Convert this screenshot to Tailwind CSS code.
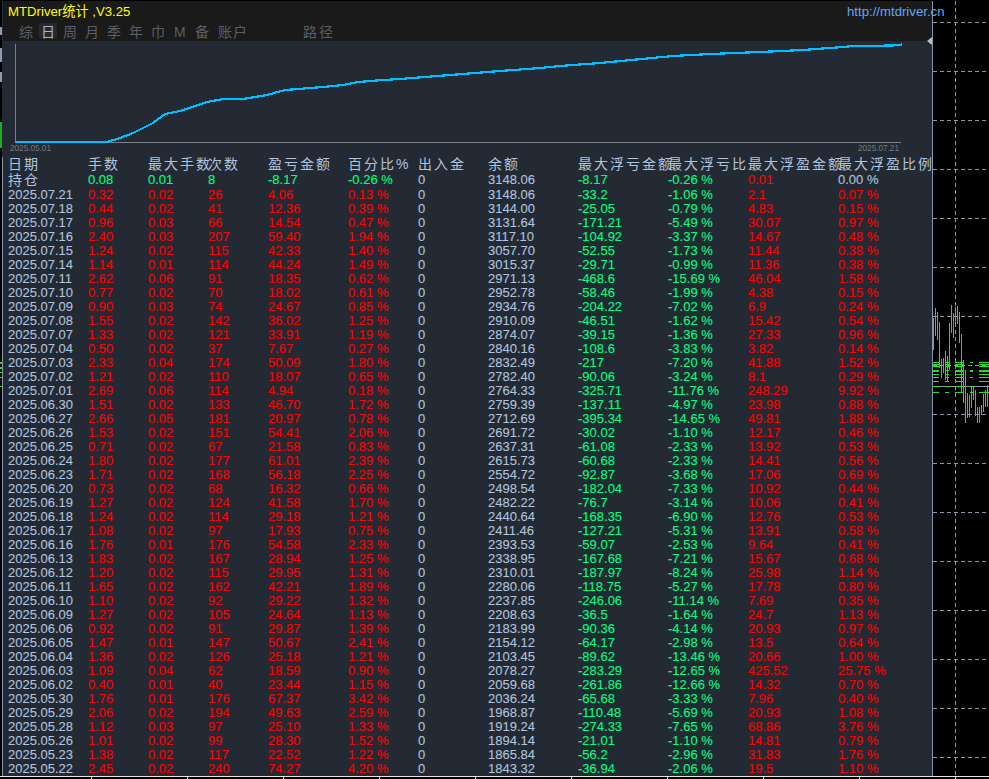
<!DOCTYPE html>
<html lang="zh">
<head>
<meta charset="UTF-8">
<title>MTDriver统计</title>
<script src="https://cdn.jsdelivr.net/npm/@tailwindcss/browser@4"></script>
</head>
<body class="bg-black h-[779px] w-[989px] overflow-hidden font-['Liberation_Sans','Noto_Sans_CJK_SC',sans-serif]">
<div class="flex h-[776px] pt-px">
  <!-- left edge of the terminal -->
  <div class="w-[2px] flex flex-col shrink-0">
    <div class="h-[26px]"></div>
    <div class="h-[8px] bg-[#8f9bb3]"></div>
    <div class="h-[13px]"></div>
    <div class="h-[14px] bg-[#8f9bb3]"></div>
    <div class="h-[10px]"></div>
    <div class="h-[10px] bg-[#8f9bb3]"></div>
    <div class="h-[40px]"></div>
    <div class="h-[26px] bg-[#22aa22]"></div>
    <div class="h-[214px]"></div>
    <div class="h-[2px] bg-[#22e022]"></div>
    <div class="h-[3px]"></div>
    <div class="h-[2px] bg-[#22e022]"></div>
    <div class="h-[3px]"></div>
    <div class="h-px bg-[#22e022]"></div>
    <div class="h-[4px]"></div>
    <div class="h-px bg-[#22e022]"></div>
    <div class="h-[8px]"></div>
    <div class="h-px bg-[#22e022]"></div>
  </div>

  <!-- stats panel -->
  <div class="w-[931px] shrink-0 flex flex-col bg-[#232a33] border-l border-r border-[#8496ad] border-l-[#232a33] relative">
    <div class="h-[40px] bg-[#1a1a1a] shrink-0 relative">
      <div class="h-[22px] pl-[5px] flex items-center text-[13.2px] leading-[20px]">
        <span class="text-[#ffff00]">MTDriver统计 ,V3.25</span>
        <span class="text-[#5fa8f5] absolute left-[844px] top-[1px] whitespace-nowrap">http://mtdriver.cn</span>
      </div>
      <div class="flex h-[18px] text-[14px] leading-[18px] tracking-[1px] text-[#5a6068] pl-[15px] whitespace-nowrap">
        <span class="w-[22px] pl-[1px]">综</span>
        <span class="w-[22px] relative"><span class="absolute left-[-1px] top-0 w-[18px] h-[15px] bg-[#232a33]"></span><span class="relative text-[#a7b8cf] pl-[1px]">日</span></span>
        <span class="w-[22px] pl-[1px]">周</span>
        <span class="w-[22px] pl-[1px]">月</span>
        <span class="w-[22px] pl-[1px]">季</span>
        <span class="w-[22px] pl-[1px]">年</span>
        <span class="w-[22px] pl-[1px]">巾</span>
        <span class="w-[22px] pl-[2px]">M</span>
        <span class="w-[22px] pl-[1px]">备</span>
        <span class="w-[87px] pl-[2px]">账户</span>
        <span class="tracking-[2px]">路径</span>
      </div>
      <span class="absolute right-0 top-[36px] w-0 h-0 border-y-[4px] border-y-transparent border-r-[5px] border-r-[#b8c0cc]"></span>
    </div>

    <!-- equity curve -->
    <svg class="block shrink-0" width="929" height="116" viewBox="3 41 929 116">
      <path d="M15.5 44V142.5H901" fill="none" stroke="#7b7f85" shape-rendering="crispEdges"/>
      <polyline shape-rendering="crispEdges" fill="none" stroke="#00bfff" stroke-width="2.2" points="15,142 107,142 120,138 133,133 153,123 165,114 180,111 207,102 223,99 243,99 267,95 285,90 323,87 343,85 358,82 383,80 400,79 450,75 500,71 540,68 560,66 600,63 673,56 710,54 760,52 803,50 843,47 853,46 893,45.5 902,44.5"/>
      <text x="10" y="151" font-size="8.2" fill="#767b81">2025.05.01</text>
      <text x="858" y="151" font-size="8.2" fill="#767b81">2025.07.21</text>
    </svg>

    <!-- table -->
    <div class="pl-[5px] -ml-px border-l border-[#8496ad] overflow-hidden flex-1">
      <div class="grid grid-cols-[80px_60px_60px_60px_80px_70px_70px_90px_90px_80px_90px_96px] h-[15px] text-[14px] tracking-[2px] leading-[15px] text-[#b0c4de] whitespace-nowrap">
        <span>日期</span><span>手数</span><span>最大手数</span><span>次数</span><span>盈亏金额</span><span>百分比%</span><span>出入金</span><span>余额</span><span>最大浮亏金额</span><span>最大浮亏比</span><span>最大浮盈金额</span><span>最大浮盈比例</span>
      </div>
      <div class="grid grid-cols-[80px_60px_60px_60px_80px_70px_70px_90px_90px_80px_90px_96px] h-[16px] text-[13px] leading-[16px] whitespace-nowrap [-webkit-text-stroke:0.1px]">
        <span class="text-[14px] tracking-[2px] text-[#b0c4de] [-webkit-text-stroke:0px]">持仓</span><span class="text-[#00ff7f]">0.08</span><span class="text-[#00ff7f]">0.01</span><span class="text-[#00ff7f]">8</span><span class="text-[#00ff7f]">-8.17</span><span class="text-[#00ff7f]">-0.26 %</span><span class="text-[#b0c4de]">0</span><span class="text-[#b0c4de]">3148.06</span><span class="text-[#00ff7f]">-8.17</span><span class="text-[#00ff7f]">-0.26 %</span><span class="text-[#ff0000]">0.01</span><span class="text-[#b0c4de]">0.00 %</span>
      </div>
      <div id="rows" class="[-webkit-text-stroke:0.1px]"></div>
    </div>
  </div>

  <!-- chart window behind the panel -->
  <svg class="block shrink-0" width="56" height="775" viewBox="933 1 56 775" shape-rendering="crispEdges">
    <path d="M933 22H989M933 71H989M933 120H989M933 169H989M933 218H989M933 267H989M933 316H989M933 365H989M933 414H989M933 463H989M933 512H989M933 561H989M933 610H989M933 659H989M933 708H989M933 757H989M955.5 1V776" stroke="#8a97a8" stroke-dasharray="4 3" fill="none"/>
    <path d="M933 386.5H989" stroke="#8a97a8"/>
    <path d="M933 362.5H939M945 362.5H949M955 362.5H963M970 362.5H973M979 362.5H989M933 364.5H939M945 364.5H949M955 364.5H963M979 364.5H989M933 366.5H939M945 366.5H949M955 366.5H963M979 366.5H989M933 370.5H939M945 370.5H949M955 370.5H963M970 370.5H973M979 370.5H989M933 371.5H939M955 371.5H963M970 371.5H973M979 371.5H989M933 374.5H939M945 374.5H949M955 374.5H963M979 374.5H989M933 377.5H939M945 377.5H949M955 377.5H963M970 377.5H973M979 377.5H989M933 381.5H939M945 381.5H949M955 381.5H963M979 381.5H989M933 386.5H939M945 386.5H949M955 386.5H963M970 386.5H973M933 392.5H939M945 392.5H949M955 392.5H963M970 392.5H973M979 392.5H989" stroke="#22e022"/>
    <path d="M933.5 318V350M935.5 308V336M937.5 312V340M939.5 322V368M941.5 359V378M943.5 358V373M945.5 351V380M947.5 356V381M949.5 323V370M951.5 305V333M953.5 313V338M955.5 307V323M957.5 306V324M959.5 312V343M961.5 334V393M963.5 360V403M965.5 370V423M967.5 393V418M969.5 395V417M971.5 387V408M973.5 387V400M975.5 390V416M977.5 407V423M979.5 407V423M981.5 405V415M983.5 394V412M985.5 390V407M987.5 385V407" stroke="#22e022" fill="none"/>
  </svg>
</div>

<!-- bottom axis -->
<svg class="block" width="989" height="3" viewBox="0 776 989 3" shape-rendering="crispEdges">
  <path d="M0 776.5H989M91.5 776V779M187.5 776V779M283.5 776V779M379.5 776V779M475.5 776V779M571.5 776V779M667.5 776V779M763.5 776V779M859.5 776V779M955.5 776V779" stroke="#e8e8e8" fill="none"/>
</svg>

<script>
  // date lots maxlots count profit pct balance maxloss lossPct maxgain gainPct
  const data = `2025.07.21|0.32|0.02|26|4.06|0.13|3148.06|-33.2|-1.06|2.1|0.07
2025.07.18|0.44|0.02|41|12.36|0.39|3144.00|-25.05|-0.79|4.83|0.15
2025.07.17|0.96|0.03|66|14.54|0.47|3131.64|-171.21|-5.49|30.07|0.97
2025.07.16|2.40|0.03|207|59.40|1.94|3117.10|-104.92|-3.37|14.67|0.48
2025.07.15|1.24|0.02|115|42.33|1.40|3057.70|-52.55|-1.73|11.44|0.38
2025.07.14|1.14|0.01|114|44.24|1.49|3015.37|-29.71|-0.99|11.36|0.38
2025.07.11|2.62|0.06|91|18.35|0.62|2971.13|-468.6|-15.69|46.04|1.58
2025.07.10|0.77|0.02|70|18.02|0.61|2952.78|-58.46|-1.99|4.38|0.15
2025.07.09|0.90|0.03|74|24.67|0.85|2934.76|-204.22|-7.02|6.9|0.24
2025.07.08|1.55|0.02|142|36.02|1.25|2910.09|-46.51|-1.62|15.42|0.54
2025.07.07|1.33|0.02|121|33.91|1.19|2874.07|-39.15|-1.36|27.33|0.96
2025.07.04|0.50|0.02|37|7.67|0.27|2840.16|-108.6|-3.83|3.82|0.14
2025.07.03|2.33|0.04|174|50.09|1.80|2832.49|-217|-7.20|41.88|1.52
2025.07.02|1.21|0.02|110|18.07|0.65|2782.40|-90.06|-3.24|8.1|0.29
2025.07.01|2.69|0.06|114|4.94|0.18|2764.33|-325.71|-11.76|248.29|9.92
2025.06.30|1.51|0.02|133|46.70|1.72|2759.39|-137.11|-4.97|23.98|0.88
2025.06.27|2.66|0.05|181|20.97|0.78|2712.69|-395.34|-14.65|49.81|1.88
2025.06.26|1.53|0.02|151|54.41|2.06|2691.72|-30.02|-1.10|12.17|0.46
2025.06.25|0.71|0.02|67|21.58|0.83|2637.31|-61.08|-2.33|13.92|0.53
2025.06.24|1.80|0.02|177|61.01|2.39|2615.73|-60.68|-2.33|14.41|0.56
2025.06.23|1.71|0.02|168|56.18|2.25|2554.72|-92.87|-3.68|17.06|0.69
2025.06.20|0.73|0.02|68|16.32|0.66|2498.54|-182.04|-7.33|10.92|0.44
2025.06.19|1.27|0.02|124|41.58|1.70|2482.22|-76.7|-3.14|10.06|0.41
2025.06.18|1.24|0.02|114|29.18|1.21|2440.64|-168.35|-6.90|12.76|0.53
2025.06.17|1.08|0.02|97|17.93|0.75|2411.46|-127.21|-5.31|13.91|0.58
2025.06.16|1.76|0.01|176|54.58|2.33|2393.53|-59.07|-2.53|9.64|0.41
2025.06.13|1.83|0.02|167|28.94|1.25|2338.95|-167.68|-7.21|15.67|0.68
2025.06.12|1.20|0.02|115|29.95|1.31|2310.01|-187.97|-8.24|25.98|1.14
2025.06.11|1.65|0.02|162|42.21|1.89|2280.06|-118.75|-5.27|17.78|0.80
2025.06.10|1.10|0.02|92|29.22|1.32|2237.85|-246.06|-11.14|7.69|0.35
2025.06.09|1.27|0.02|105|24.64|1.13|2208.63|-36.5|-1.64|24.7|1.13
2025.06.06|0.92|0.02|91|29.87|1.39|2183.99|-90.36|-4.14|20.93|0.97
2025.06.05|1.47|0.01|147|50.67|2.41|2154.12|-64.17|-2.98|13.5|0.64
2025.06.04|1.36|0.02|126|25.18|1.21|2103.45|-89.62|-13.46|20.66|1.00
2025.06.03|1.09|0.04|62|18.59|0.90|2078.27|-283.29|-12.65|425.52|25.75
2025.06.02|0.40|0.01|40|23.44|1.15|2059.68|-261.86|-12.66|14.32|0.70
2025.05.30|1.76|0.01|176|67.37|3.42|2036.24|-65.68|-3.33|7.96|0.40
2025.05.29|2.06|0.02|194|49.63|2.59|1968.87|-110.48|-5.69|20.93|1.08
2025.05.28|1.12|0.03|97|25.10|1.33|1919.24|-274.33|-7.65|68.86|3.76
2025.05.26|1.01|0.02|99|28.30|1.52|1894.14|-21.01|-1.10|14.81|0.79
2025.05.23|1.38|0.02|117|22.52|1.22|1865.84|-56.2|-2.96|31.83|1.76
2025.05.22|2.45|0.02|240|74.27|4.20|1843.32|-36.94|-2.06|19.5|1.10`;

  const label = 'text-[#b0c4de]', red = 'text-[#ff0000]', green = 'text-[#00ff7f]';
  const colours = [label, red, red, red, red, red, label, label, green, green, red, red];
  const rows = document.getElementById('rows');

  data.split('\n').forEach((line) => {
    const f = line.split('|');
    const cells = [f[0], f[1], f[2], f[3], f[4], f[5] + ' %', '0', f[6], f[7], f[8] + ' %', f[9], f[10] + ' %'];
    const row = document.createElement('div');
    row.className = 'grid grid-cols-[80px_60px_60px_60px_80px_70px_70px_90px_90px_80px_90px_96px] h-[14px] text-[13px] leading-[14px] whitespace-nowrap';
    cells.forEach((text, i) => {
      const cell = document.createElement('span');
      cell.className = colours[i];
      cell.textContent = text;
      row.appendChild(cell);
    });
    rows.appendChild(row);
  });
</script>
</body>
</html>
